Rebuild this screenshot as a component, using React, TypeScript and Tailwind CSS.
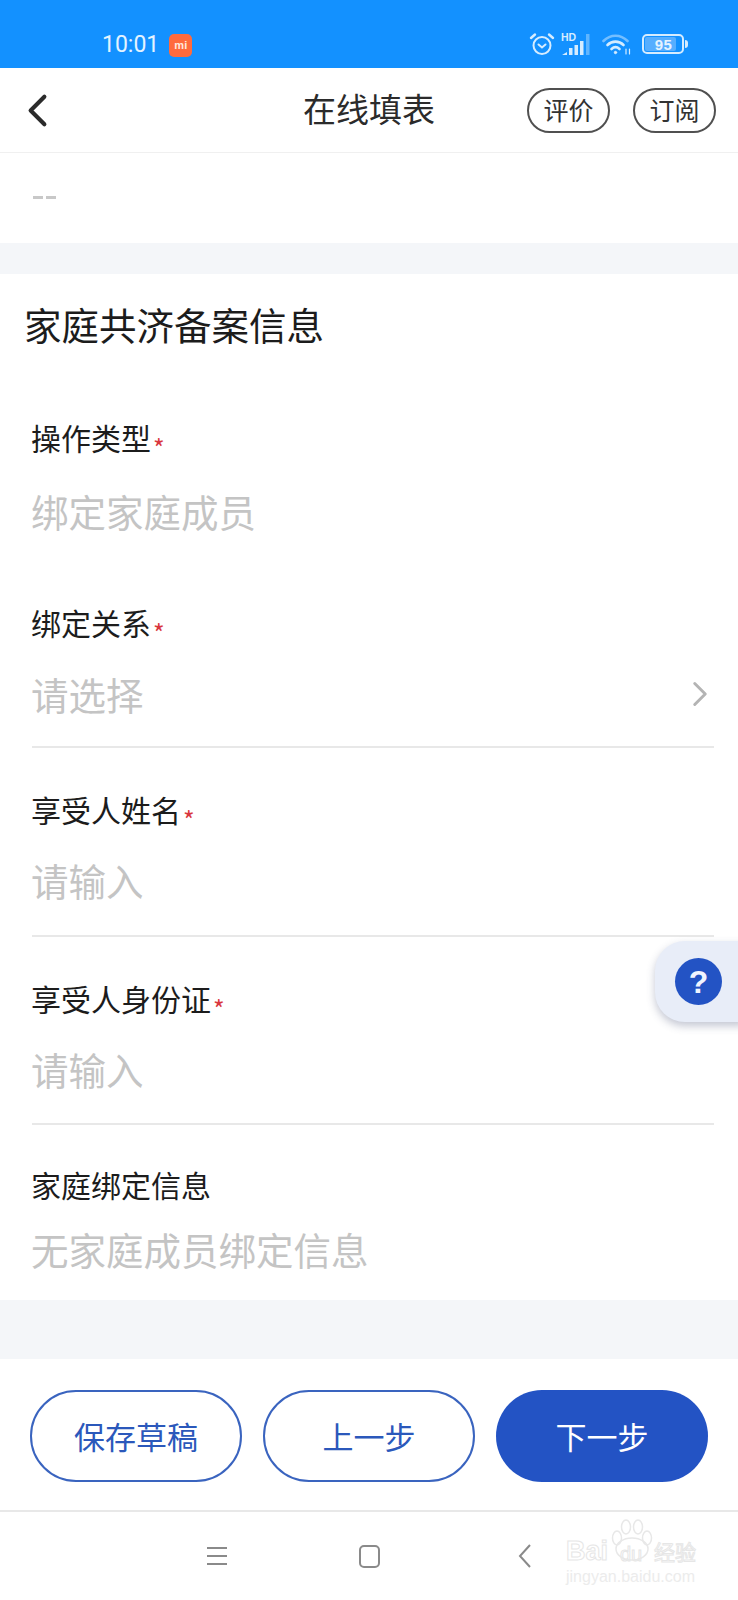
import { ChevronLeft, ChevronRight } from "lucide-react";

const FONT = "font-['Noto_Sans_CJK_SC','Noto_Sans',sans-serif]";

function StatusIcons() {
  return (
    <div className="mb-[3px] flex items-center text-[#d5ecff]">
      <svg width="26" height="24" viewBox="0 0 26 24" fill="none" stroke="currentColor" strokeWidth="2">
        <circle cx="13" cy="13.500" r="8.500" />
        <path d="M9.500 12.500l3.500 3 3.500-3" strokeLinecap="round" />
        <path d="M2 6l4-3.500M24 6l-4-3.500" strokeLinecap="round" strokeWidth="2.400" />
      </svg>
      <svg className="ml-[6px]" width="29" height="24" viewBox="0 0 29 24" fill="currentColor">
        <text x="0" y="9" fontSize="10.500" fontWeight="700" fontFamily="Liberation Sans">HD</text>
        <path d="M1 23l5-3v3zM8 16h3.500v7h-3.500zM13.500 13h3.500v10h-3.500zM19 9h3.500v14h-3.500z" />
        <path d="M25 2h3.500v21h-3.500z" opacity="0.4" />
      </svg>
      <svg className="ml-[12px]" width="30" height="22" viewBox="0 0 30 22" fill="none" stroke="currentColor" strokeWidth="2.600" strokeLinecap="round">
        <path d="M1.500 8c7-7 17-7 24 0" opacity="0.5" />
        <path d="M5.500 12c4.500-4.500 11.500-4.500 16 0" />
        <path d="M9.500 16c2.500-2.300 5.500-2.300 8 0" />
        <circle cx="13.500" cy="19.500" r="1.200" fill="currentColor" strokeWidth="1" />
        <path d="M24 16v5M27.500 16v5" strokeWidth="1.200" />
      </svg>
      <div className="ml-[10px] flex items-center">
        <div className="flex h-[20px] w-[42px] items-center rounded-[5px] border-2 border-[#d5ecff] p-[1px]">
          <div className="flex h-full w-[31px] items-center justify-center rounded-[2px] bg-[#56aeff] pl-[6px] font-['Liberation_Sans',sans-serif] text-[15px] font-bold leading-none tracking-[0.5px] text-[#e4f3ff]">
            95
          </div>
        </div>
        <div className="ml-[1px] h-[8px] w-[3px] rounded-r bg-[#d5ecff]" />
      </div>
    </div>
  );
}

function Required() {
  return <span className="ml-[2px] translate-y-[10px] text-[25px] leading-none text-[#d9363e]">*</span>;
}

interface FieldProps {
  label: string;
  value: string;
  required?: boolean;
  arrow?: boolean;
  line?: boolean;
  heightClass: string;
  gapClass: string;
}

function Field({ label, value, required, arrow, line, heightClass, gapClass }: FieldProps) {
  return (
    <div className={`ml-[32px] mr-[24px] flex flex-col ${heightClass} ${line ? "border-b-2 border-[#e8e8e8]" : ""}`}>
      <div className="-ml-[1px] flex h-[32px] items-center text-[30px] leading-none text-[#1c1c1c]">
        {label}
        {required && <Required />}
      </div>
      <div className={`${gapClass} -ml-[1px] flex h-[44px] items-center justify-between text-[37.500px] leading-none text-[#c4c4c4]`}>
        {value}
        {arrow && <ChevronRight className="mr-[-7px] h-[42px] w-[42px] text-[#b4b4b4]" strokeWidth={1.700} />}
      </div>
    </div>
  );
}

export default function App() {
  return (
    <div className={`relative flex h-[1600px] w-[738px] flex-col overflow-hidden bg-white ${FONT}`}>
      {/* status bar */}
      <div className="flex h-[68px] items-end justify-between bg-[#1391ff] pb-[9px] pl-[102px] pr-[50px]">
        <div className="flex items-center gap-[10px]">
          <span className="font-['Roboto',sans-serif] text-[23px] leading-[28px] text-[#e3f3ff]">10:01</span>
          <div className="flex h-[23px] w-[23px] items-center justify-center rounded-[5px] bg-[#ff6a3d] font-['Liberation_Sans',sans-serif] text-[11px] font-bold leading-none text-[#ffe9df]">
            mi
          </div>
        </div>
        <StatusIcons />
      </div>

      {/* header */}
      <div className="relative flex h-[85px] items-center justify-end border-b border-[#f0f0f0] pr-[22px]">
        <ChevronLeft className="absolute left-[10px] top-[15px] h-[55px] w-[55px] text-[#2b2b2b]" strokeWidth={1.800} />
        <div className="absolute inset-x-0 top-[17px] text-center text-[33px] leading-[46px] text-[#2b2b2b]">在线填表</div>
        <div className="flex gap-[23px]">
          <div className="flex h-[45px] w-[83px] items-center justify-center rounded-full border-2 border-[#505050] pb-[1px] text-[25px] leading-none text-[#333333]">评价</div>
          <div className="flex h-[45px] w-[83px] items-center justify-center rounded-full border-2 border-[#505050] pb-[1px] text-[25px] leading-none text-[#333333]">订阅</div>
        </div>
      </div>

      <div className="flex h-[90px] items-center pl-[33px] pb-[1px]">
        <div className="flex gap-[3px]">
          <div className="h-[3px] w-[10px] bg-[#c8c8c8]" />
          <div className="h-[3px] w-[10px] bg-[#c8c8c8]" />
        </div>
      </div>
      <div className="h-[31px] bg-[#f4f6f9]" />

      {/* form */}
      <div className="flex h-[1026px] flex-col bg-white">
        <div className="ml-[24px] mt-[28px] text-[37.500px] leading-[44px] text-[#1c1c1c]">家庭共济备案信息</div>
        <div className="mt-[75px] flex flex-col">
          <Field label="操作类型" value="绑定家庭成员" required heightClass="h-[185px]" gapClass="mt-[36px]" />
          <Field label="绑定关系" value="请选择" required arrow line heightClass="h-[142px]" gapClass="mt-[34px]" />
          <div className="mt-[45px]">
            <Field label="享受人姓名" value="请输入" required line heightClass="h-[144px]" gapClass="mt-[33px]" />
          </div>
          <div className="mt-[45px]">
            <Field label="享受人身份证" value="请输入" required line heightClass="h-[143px]" gapClass="mt-[33px]" />
          </div>
          <div className="mt-[44px]">
            <Field label="家庭绑定信息" value="无家庭成员绑定信息" heightClass="h-[100px]" gapClass="mt-[29px]" />
          </div>
        </div>
      </div>
      <div className="h-[59px] bg-[#f4f6f9]" />

      {/* actions */}
      <div className="flex h-[153px] items-start gap-[21px] border-b-2 border-[#e8e8e8] pl-[30px] pt-[31px]">
        <div className="flex h-[92px] w-[212px] items-center justify-center rounded-full border-2 border-[#3a64bf] pb-[2px] text-[31px] leading-none text-[#2b58bb]">保存草稿</div>
        <div className="flex h-[92px] w-[212px] items-center justify-center rounded-full border-2 border-[#3a64bf] pb-[2px] text-[31px] leading-none text-[#2b58bb]">上一步</div>
        <div className="flex h-[92px] w-[212px] items-center justify-center rounded-full bg-[#2353c4] pb-[2px] text-[31px] leading-none text-white">下一步</div>
      </div>

      {/* nav bar */}
      <div className="flex flex-1 items-center justify-start pl-[206px]">
        <svg width="22" height="20" viewBox="0 0 22 20" stroke="#8a8a8a" strokeWidth="2" fill="none">
          <path d="M1 2h20M1 10h20M1 18h20" />
        </svg>
        <div className="ml-[131px] h-[23px] w-[21px] rounded-[5px] border-2 border-[#8a8a8a]" />
        <svg className="ml-[138px]" width="14" height="24" viewBox="0 0 14 24" stroke="#8a8a8a" strokeWidth="2" fill="none">
          <path d="M12 1L2 12l10 11" />
        </svg>
      </div>

      {/* baidu watermark */}
      <div className="absolute left-[566px] top-[1538px] flex w-[134px] flex-col items-start leading-none">
        <svg className="absolute left-[44px] top-[-19px]" width="44" height="42" viewBox="0 0 44 42" fill="none" stroke="#e8e8e8" strokeWidth="1.500">
          <ellipse cx="7" cy="19" rx="4.500" ry="7" />
          <ellipse cx="16" cy="8" rx="4.500" ry="7" />
          <ellipse cx="28" cy="8" rx="4.500" ry="7" />
          <ellipse cx="37" cy="19" rx="4.500" ry="7" />
          <ellipse cx="22" cy="30" rx="16" ry="11" />
        </svg>
        <div className="flex h-[26px] w-full items-center font-['Liberation_Sans',sans-serif] text-[27px] font-bold text-white [-webkit-text-stroke:1px_#e6e6e6]">
          <span className="w-[54px]">Bai</span>
          <span className="mt-[5px] w-[34px] text-[20px] font-normal">du</span>
          <span className={`text-[21px] font-normal ${FONT}`}>经验</span>
        </div>
        <div className="mt-[3px] font-['Liberation_Sans',sans-serif] text-[16px] leading-[20px] text-[#ececec]">jingyan.baidu.com</div>
      </div>

      {/* floating help */}
      <div className="absolute left-[655px] top-[941px] flex h-[81px] w-[90px] items-start rounded-l-[30px] bg-[#e8edf8] pl-[20px] pt-[17px] shadow-[0_4px_8px_rgba(60,70,110,0.3)]">
        <div className="flex h-[47px] w-[47px] items-center justify-center rounded-full bg-[#2353c4] font-['Liberation_Sans',sans-serif] text-[32px] font-bold leading-none text-[#f0f4ff]">?</div>
      </div>
    </div>
  );
}
